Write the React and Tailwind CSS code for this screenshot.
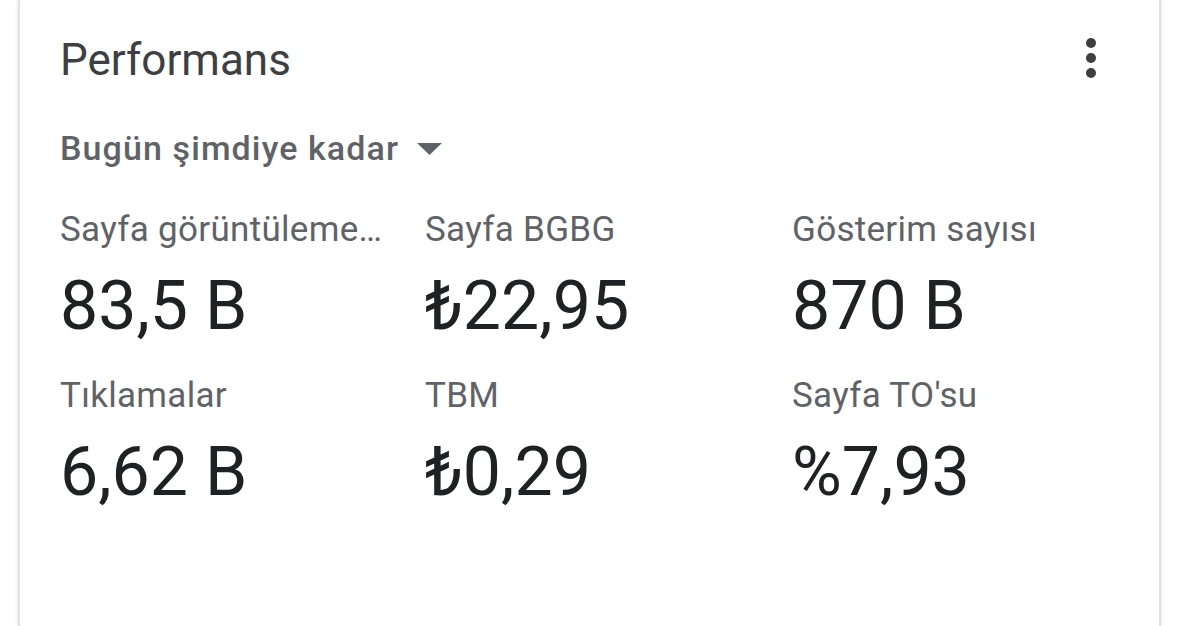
const metrics = [
  { label: "Sayfa görüntüleme…", value: "83,5 B" },
  { label: "Sayfa BGBG", value: "₺22,95" },
  { label: "Gösterim sayısı", value: "870 B" },
  { label: "Tıklamalar", value: "6,62 B" },
  { label: "TBM", value: "₺0,29" },
  { label: "Sayfa TO'su", value: "%7,93" },
]

const App = () => {
  return (
    <div className="h-[626px] w-[1179px] overflow-hidden bg-white" style={{ fontFamily: "Roboto, 'Noto Sans', sans-serif" }}>
      <div className="ml-[18px] h-full w-[1143px] border-x-2 border-[#e2e2e2] bg-white shadow-[0_0_4px_rgba(0,0,0,0.12)]">
        <div className="flex items-start justify-between pl-[40px] pr-[61px] pt-[34px]">
          <h1 className="text-[44px] leading-[52px] font-normal text-[#3c4043]">Performans</h1>
          <svg width="14" height="44" viewBox="0 0 14 44" className="mt-[2px] fill-[#3c4043]">
            <circle cx="7" cy="7" r="5" />
            <circle cx="7" cy="22" r="5" />
            <circle cx="7" cy="37" r="5" />
          </svg>
        </div>

        <button className="mt-[42px] ml-[40px] flex items-center text-[34px] leading-[40px] font-medium tracking-[1.1px] text-[#5f6368]">
          Bugün şimdiye kadar
          <svg width="26" height="14" viewBox="0 0 26 14" className="ml-[18px] mt-[2px] fill-[#5f6368]">
            <path d="M0 1h25L12.5 13z" />
          </svg>
        </button>

        <div className="mt-[42px] ml-[40px] grid grid-cols-[365px_367px_1fr] gap-y-[32px]">
          {metrics.map((m) => (
            <div key={m.label} className="flex flex-col">
              <span className="truncate pr-[20px] text-[35px] leading-[40px] tracking-[0.3px] text-[#5f6368]">{m.label}</span>
              <span className="mt-[18px] text-[68px] leading-[76px] text-[#202124]">{m.value}</span>
            </div>
          ))}
        </div>
      </div>
    </div>
  )
}

export default App
